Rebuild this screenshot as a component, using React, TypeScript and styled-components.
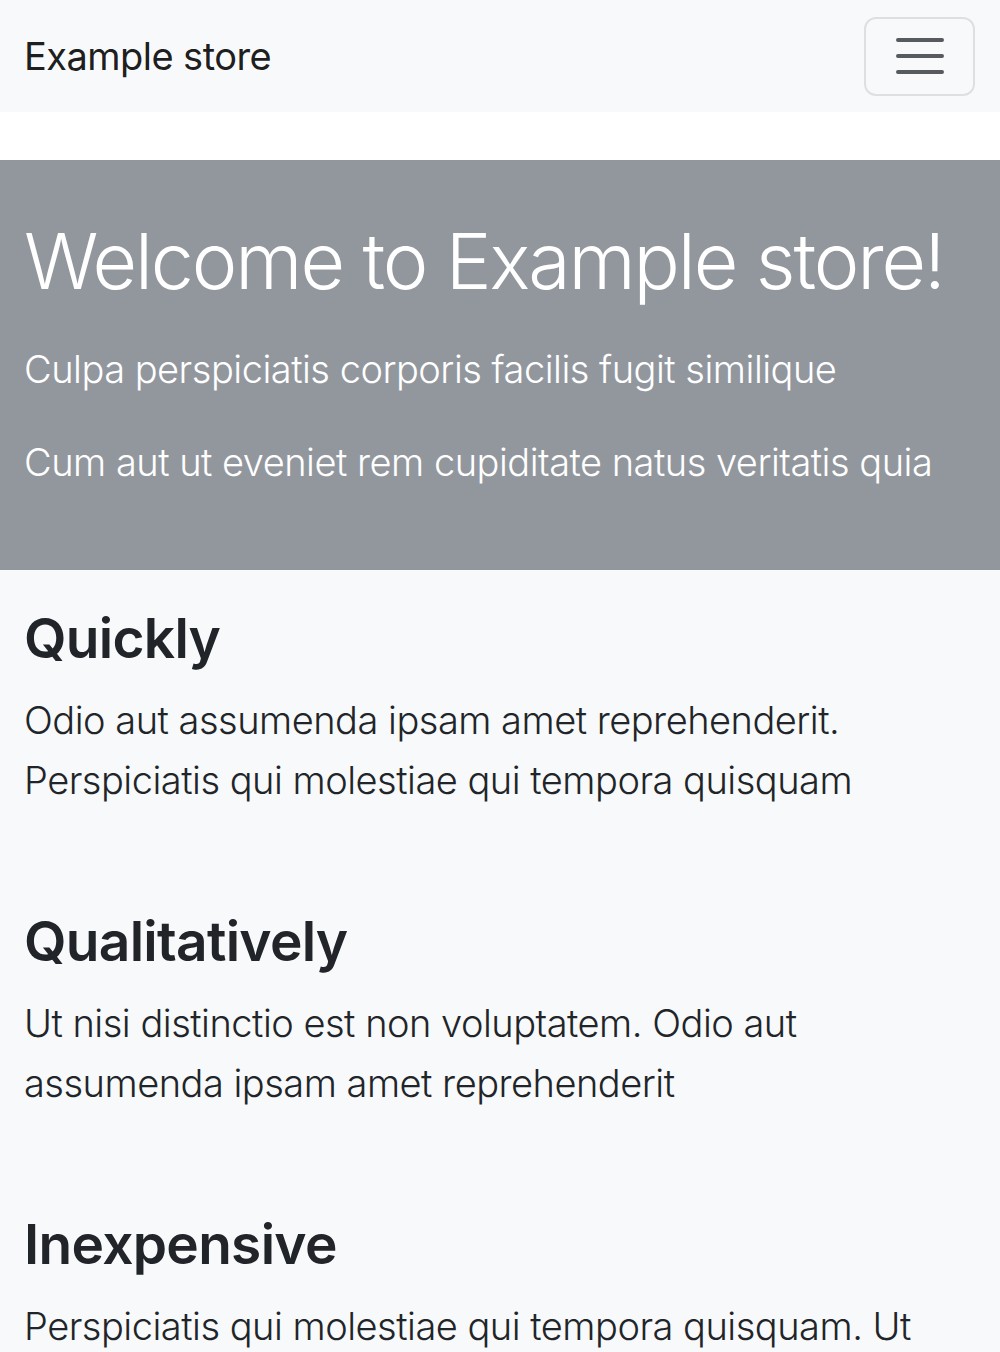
import React from "react";
import styled, { createGlobalStyle } from "styled-components";

const Global = createGlobalStyle`
  html, body { margin: 0; padding: 0; }
  body {
    background: #f8f9fa;
    font-family: Inter, "Noto Sans", "Liberation Sans", sans-serif;
    color: #212529;
    -webkit-font-smoothing: antialiased;
  }
  * { box-sizing: border-box; }
`;

const Navbar = styled.nav`
  height: 112px;
  background: #f8f9fa;
  display: flex;
  align-items: center;
  justify-content: space-between;
  padding: 0 25px 0 24px;
`;

const Brand = styled.a`
  font-size: 38px;
  line-height: 60px;
  font-weight: 400;
  color: rgba(0, 0, 0, 0.9);
  text-decoration: none;
  letter-spacing: -0.55px;
`;

const Toggler = styled.button`
  width: 111px;
  height: 79px;
  border: 2px solid rgba(0, 0, 0, 0.1);
  border-radius: 12px;
  background: transparent;
  display: flex;
  align-items: center;
  justify-content: center;
  padding: 0;
`;

const Spacer = styled.div`
  height: 48px;
  background: #ffffff;
`;

const Hero = styled.header`
  background: #92979e;
  color: #ffffff;
  padding: 55px 24px 46px;
`;

const HeroTitle = styled.h1`
  margin: 0 0 32px;
  font-size: 77px;
  line-height: 1.2;
  font-weight: 300;
  letter-spacing: -2.1px;
  white-space: nowrap;
`;

const Lead = styled.p`
  margin: 0 0 33px;
  font-size: 38px;
  line-height: 60px;
  font-weight: 300;
  letter-spacing: -0.5px;
  &:last-child { margin-bottom: 32px; }
`;

const Content = styled.main`
  padding: 0 24px;
`;

const Feature = styled.section`
  padding-top: 35px;
  padding-bottom: 31px;
`;

const FeatureTitle = styled.h2`
  margin: 0 0 19px;
  font-size: 55px;
  line-height: 1.2;
  font-weight: 600;
  letter-spacing: -0.7px;
`;

const FeatureText = styled.p`
  margin: 0 0 32px;
  font-size: 38px;
  line-height: 60px;
  font-weight: 300;
  letter-spacing: -0.5px;
`;

const features = [
  {
    title: "Quickly",
    text: "Odio aut assumenda ipsam amet reprehenderit. Perspiciatis qui molestiae qui tempora quisquam",
  },
  {
    title: "Qualitatively",
    text: "Ut nisi distinctio est non voluptatem. Odio aut assumenda ipsam amet reprehenderit",
  },
  {
    title: "Inexpensive",
    text: "Perspiciatis qui molestiae qui tempora quisquam. Ut nisi distinctio est non voluptatem",
  },
];

export default function App() {
  return (
    <>
      <Global />
      <Navbar>
        <Brand href="#">Example store</Brand>
        <Toggler aria-label="Toggle navigation">
          <svg width="60" height="60" viewBox="0 0 30 30">
            <path
              d="M4 7h22M4 15h22M4 23h22"
              stroke="rgba(33,37,41,0.75)"
              strokeWidth="2"
              strokeLinecap="round"
              strokeMiterlimit="10"
            />
          </svg>
        </Toggler>
      </Navbar>
      <Spacer />
      <Hero>
        <HeroTitle>Welcome to Example store!</HeroTitle>
        <Lead>Culpa perspiciatis corporis facilis fugit similique</Lead>
        <Lead>Cum aut ut eveniet rem cupiditate natus veritatis quia</Lead>
      </Hero>
      <Content>
        {features.map((f) => (
          <Feature key={f.title}>
            <FeatureTitle>{f.title}</FeatureTitle>
            <FeatureText>{f.text}</FeatureText>
          </Feature>
        ))}
      </Content>
    </>
  );
}
